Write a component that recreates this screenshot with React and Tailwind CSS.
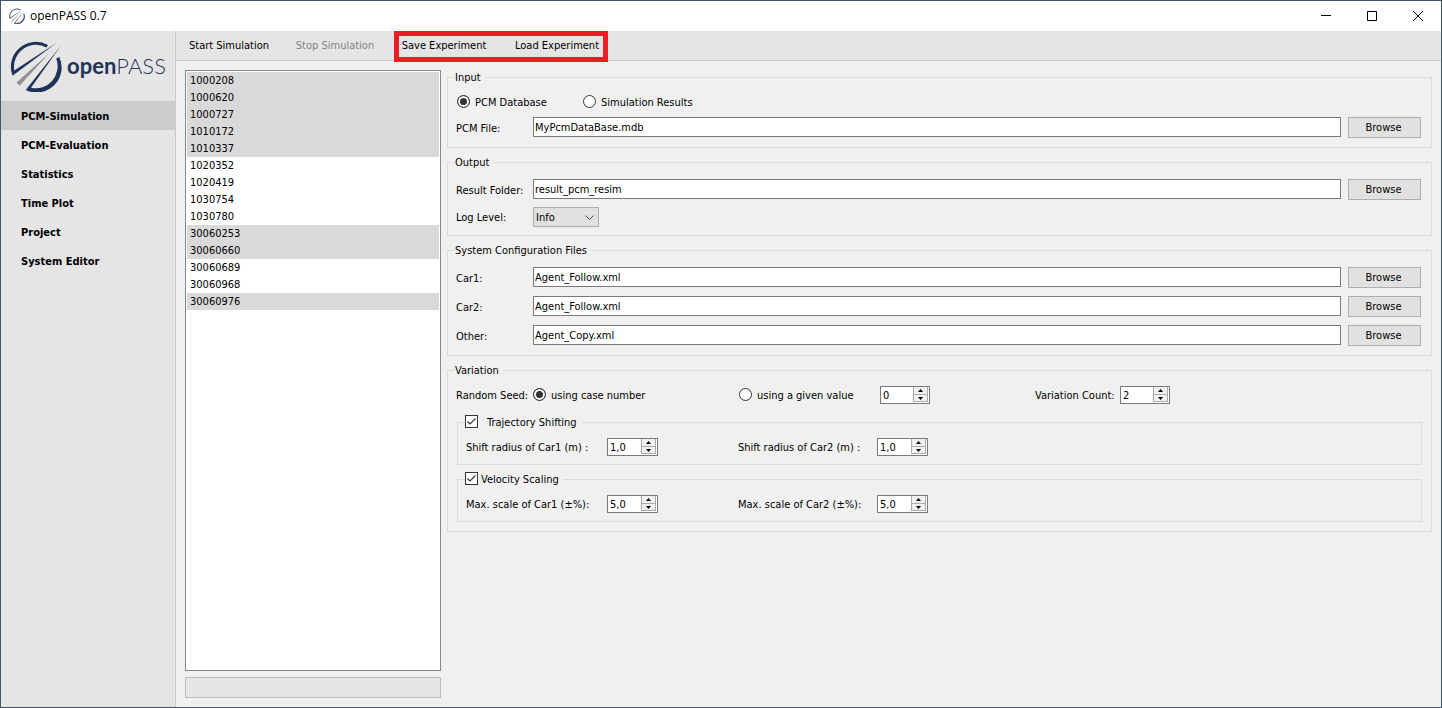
import React, { useState } from 'react';

const NAV = ['PCM-Simulation', 'PCM-Evaluation', 'Statistics', 'Time Plot', 'Project', 'System Editor'];

const CASES = [
  '1000208', '1000620', '1000727', '1010172', '1010337', '1020352', '1020419',
  '1030754', '1030780', '30060253', '30060660', '30060689', '30060968', '30060976',
];

const PICKED = ['1000208', '1000620', '1000727', '1010172', '1010337', '30060253', '30060660', '30060976'];

function LogoMark({ className }) {
  return (
    <svg viewBox="7 4 52 52" className={className} aria-hidden="true">
      <path d="M45 9 A25 25 0 0 0 9.5 39.8 L54 6.5 L11.3 34.500 A22 22 0 0 1 43.500 11.500 Z" fill="#1f3358" />
      <path d="M13.500 46.500 L16.500 49.800 L46 17.500 Z" fill="#8f8f8f" />
      <path d="M58 9.500 L22.700 54 A25 25 0 0 0 56.300 21 L53.200 22.500 A22 22 0 0 1 28 51.800 Z" fill="#1f3358" />
    </svg>
  );
}

function Group({ title, className, children }) {
  return (
    <fieldset className={`min-w-0 border border-[#dcdcdc] pl-2 pr-[10px] ${className}`}>
      <legend className="-ml-px flex h-[14px] items-start pr-1">{title}</legend>
      {children}
    </fieldset>
  );
}

function FileRow({ id, label, value }) {
  return (
    <div className="flex h-[21px] items-start">
      <label htmlFor={id} className="w-[77px] shrink-0 leading-6">{label}</label>
      <input id={id} defaultValue={value} className="h-5 min-w-0 flex-1 border border-[#7a7a7a] bg-white px-px pt-px" />
      <button type="button" aria-label={`Browse ${label}`} className="ml-[7px] h-[21px] w-[73px] border border-[#adadad] bg-[#e1e1e1] pr-[2px] pt-px">Browse</button>
    </div>
  );
}

function Radio({ name, label, checked, onChange, className }) {
  return (
    <label className={`flex h-[14px] shrink-0 items-start gap-[5px] ${className}`}>
      <input
        type="radio"
        name={name}
        checked={checked}
        onChange={onChange}
        className="size-[13px] appearance-none rounded-full border border-[#333] bg-white checked:bg-[#333] checked:shadow-[inset_0_0_0_2px_white]"
      />
      {label}
    </label>
  );
}

function Check({ label, gap }) {
  return (
    <label className={`flex items-start ${gap}`}>
      <span className="relative size-[13px]">
        <input type="checkbox" defaultChecked className="peer block size-[13px] appearance-none border border-[#333] bg-white" />
        <svg viewBox="0 0 13 13" className="pointer-events-none absolute inset-0 hidden peer-checked:block" fill="none" stroke="#333" strokeWidth="1.200">
          <path d="M2.500 6.500 L5 9 L10.500 3.500" />
        </svg>
      </span>
      {label}
    </label>
  );
}

function Spin({ id, start, step = 1, width = 'w-[51px]' }) {
  const [val, setVal] = useState(start);
  const bump = (d) => {
    const n = Math.max(0, parseFloat(val.replace(',', '.')) + d);
    setVal(step < 1 ? n.toFixed(1).replace('.', ',') : String(n));
  };
  return (
    <span className={`flex h-[18px] shrink-0 border border-[#7a7a7a] bg-white ${width}`}>
      <input id={id} value={val} onChange={(e) => setVal(e.target.value)} className="min-w-0 flex-1 pl-[2px] pt-px outline-none" />
      <span className="mr-px flex w-[15px] flex-col">
        <button type="button" aria-label="Increase" onClick={() => bump(step)} className="flex h-2 items-center justify-center border-x border-b border-[#ababab] bg-[#f0f0f0]">
          <svg viewBox="0 0 5 3" className="h-[3px] w-[5px]"><path d="M0 3 L2.500 0 L5 3 Z" /></svg>
        </button>
        <button type="button" aria-label="Decrease" onClick={() => bump(-step)} className="flex h-[7px] items-center justify-center border-x border-b border-[#ababab] bg-[#f0f0f0]">
          <svg viewBox="0 0 5 3" className="h-[3px] w-[5px]"><path d="M0 0 L5 0 L2.500 3 Z" /></svg>
        </button>
      </span>
    </span>
  );
}

function PairRow({ ids, labels, start }) {
  return (
    <div className="flex h-[18px] items-center">
      <label htmlFor={ids[0]} className="w-[141px] shrink-0 pt-[2px]">{labels[0]}</label>
      <Spin id={ids[0]} start={start} step={0.1} />
      <label htmlFor={ids[1]} className="ml-20 w-[139px] shrink-0 pt-[2px]">{labels[1]}</label>
      <Spin id={ids[1]} start={start} step={0.1} />
    </div>
  );
}

export default function App() {
  const [page, setPage] = useState('PCM-Simulation');
  const [picked, setPicked] = useState(PICKED);
  const [source, setSource] = useState('db');
  const [seed, setSeed] = useState('case');

  function toggle(id) {
    setPicked(picked.includes(id) ? picked.filter((p) => p !== id) : [...picked, id]);
  }

  return (
    <div className="flex min-h-screen flex-col border border-[#44546a] bg-[#f0f0f0] font-['DejaVu_Sans_Condensed','DejaVu_Sans',sans-serif] text-[11px] leading-4 text-black">
      <header className="flex h-[30px] items-center bg-white pl-2">
        <LogoMark className="size-4 opacity-80" />
        <h1 className="ml-[5px] flex-1 font-['Open_Sans',sans-serif] text-xs">openPASS 0.7</h1>
        <button type="button" aria-label="Minimize" className="flex h-full w-[46px] items-center justify-center">
          <svg viewBox="0 0 10 10" className="size-[10px]"><path d="M0 4.500 H10" stroke="#000" /></svg>
        </button>
        <button type="button" aria-label="Maximize" className="flex h-full w-[46px] items-center justify-center">
          <svg viewBox="0 0 10 10" className="size-[10px]"><path d="M.5 .5 H9.500 V9.500 H.5 Z" fill="none" stroke="#000" /></svg>
        </button>
        <button type="button" aria-label="Close" className="flex h-full w-[46px] items-center justify-center">
          <svg viewBox="0 0 10 10" className="size-[10px]"><path d="M0 0 L10 10 M10 0 L0 10" stroke="#000" /></svg>
        </button>
      </header>

      <div className="flex flex-1">
        <aside className="w-[175px] shrink-0 border-r border-[#c8c8c8] bg-[#e5e5e5]">
          <div className="flex h-[70px] items-center pl-[9px] font-['Lato',sans-serif] text-[22px] leading-[28px] text-[#1f3358]">
            <LogoMark className="size-[52px] shrink-0" />
            <span className="ml-[5px]"><b>open</b><span className="font-light">PASS</span></span>
          </div>
          <nav className="flex flex-col">
            {NAV.map((n) => (
              <button
                key={n}
                type="button"
                onClick={() => setPage(n)}
                className={`h-[29px] pl-5 pt-[2px] text-left font-bold ${page === n ? 'bg-[#cccccc]' : ''}`}
              >
                {n}
              </button>
            ))}
          </nav>
        </aside>

        <div className="flex min-w-0 flex-1 flex-col">
          <div className="flex h-[30px] border-b border-[#c8c8c8] bg-[#e5e5e5]">
            <button type="button" className="w-[106px] pt-px">Start Simulation</button>
            <button type="button" disabled className="w-[106px] pt-px text-[#838383]">Stop Simulation</button>
            <div className="relative ml-[6px] flex">
              <button type="button" className="w-[100px] pt-px">Save Experiment</button>
              <button type="button" className="ml-3 w-[102px] pt-px">Load Experiment</button>
              <span className="pointer-events-none absolute -bottom-[2px] left-0 right-0 top-0 border-[5px] border-[#ed1c24]" />
            </div>
          </div>

          <main className="flex flex-1 gap-[6px] p-[9px]">
            <section className="flex w-[256px] shrink-0 flex-col gap-[6px]">
              <ul className="flex-1 border border-[#828790] bg-white p-px">
                {CASES.map((c) => (
                  <li key={c}>
                    <button
                      type="button"
                      onClick={() => toggle(c)}
                      className={`block h-[17px] w-full pl-[3px] pt-px text-left ${picked.includes(c) ? 'bg-[#d9d9d9]' : ''}`}
                    >
                      {c}
                    </button>
                  </li>
                ))}
              </ul>
              <div role="progressbar" aria-label="Progress" className="h-[21px] border border-[#bcbcbc] bg-[#e6e6e6]" />
            </section>

            <form className="flex min-w-0 flex-1 flex-col gap-[7px]">
              <Group title="Input" className="pb-[9px] pt-2">
                <div className="mb-[5px] flex h-5 items-center pl-px">
                  <Radio name="source" label="PCM Database" checked={source === 'db'} onChange={() => setSource('db')} className="w-[126px]" />
                  <Radio name="source" label="Simulation Results" checked={source === 'results'} onChange={() => setSource('results')} className="" />
                </div>
                <FileRow id="pcm-file" label="PCM File:" value="MyPcmDataBase.mdb" />
              </Group>

              <Group title="Output" className="pb-2 pt-[10px]">
                <FileRow id="result-folder" label="Result Folder:" value="result_pcm_resim" />
                <div className="mt-[7px] flex h-5 items-center">
                  <label htmlFor="log-level" className="w-[77px] shrink-0 pt-[2px]">Log Level:</label>
                  <span className="relative">
                    <select id="log-level" className="block h-5 w-[66px] appearance-none border border-[#adadad] bg-[#e1e1e1] pl-[2px] pt-px">
                      <option>Info</option>
                      <option>Debug</option>
                      <option>Error</option>
                    </select>
                    <svg viewBox="0 0 9 5" className="pointer-events-none absolute right-[5px] top-2 h-[5px] w-[9px]" fill="none" stroke="#444">
                      <path d="M.5 .5 L4.500 4.500 L8.500 .5" />
                    </svg>
                  </span>
                </div>
              </Group>

              <Group title="System Configuration Files" className="pb-[9px] pt-[10px]">
                <div className="flex flex-col gap-2">
                  <FileRow id="car1" label="Car1:" value="Agent_Follow.xml" />
                  <FileRow id="car2" label="Car2:" value="Agent_Follow.xml" />
                  <FileRow id="other" label="Other:" value="Agent_Copy.xml" />
                </div>
              </Group>

              <Group title="Variation" className="pb-[9px] pt-[9px]">
                <div className="mb-[11px] flex h-[18px] items-center">
                  <span className="w-[77px] shrink-0 pt-[2px]">Random Seed:</span>
                  <Radio name="seed" label="using case number" checked={seed === 'case'} onChange={() => setSeed('case')} className="w-[206px]" />
                  <Radio name="seed" label="using a given value" checked={seed === 'value'} onChange={() => setSeed('value')} className="w-[141px]" />
                  <Spin id="seed-value" start="0" width="w-[50px]" />
                  <label htmlFor="variation-count" className="ml-[105px] w-[85px] shrink-0 pt-[2px]">Variation Count:</label>
                  <Spin id="variation-count" start="2" width="w-[50px]" />
                </div>
                <div className="-mr-px ml-px flex flex-col gap-[7px]">
                  <Group title={<Check label="Trajectory Shifting" gap="gap-[9px]" />} className="pb-2 pt-[9px]">
                    <PairRow ids={['shift1', 'shift2']} labels={['Shift radius of Car1 (m) :', 'Shift radius of Car2 (m) :']} start="1,0" />
                  </Group>
                  <Group title={<Check label="Velocity Scaling" gap="gap-[3px]" />} className="pb-2 pt-[9px]">
                    <PairRow ids={['scale1', 'scale2']} labels={['Max. scale of Car1 (±%):', 'Max. scale of Car2 (±%):']} start="5,0" />
                  </Group>
                </div>
              </Group>
            </form>
          </main>
        </div>
      </div>
    </div>
  );
}
